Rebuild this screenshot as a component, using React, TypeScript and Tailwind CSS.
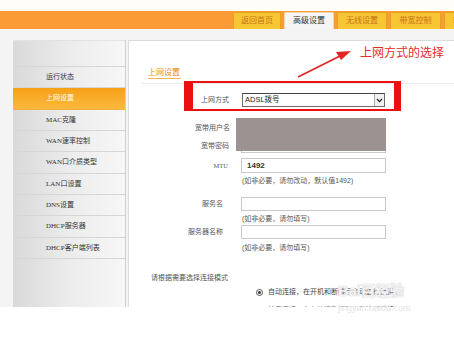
import React from "react";

const cjk = { fontFamily: '"Liberation Sans","Noto Sans CJK SC",sans-serif' };
const serif = { fontFamily: '"Liberation Serif","Noto Sans CJK SC",serif' };

const tabs = [
  { t: "返回首页", w: 48, active: false },
  { t: "高级设置", w: 50, active: true },
  { t: "无线设置", w: 50, active: false },
  { t: "带宽控制", w: 51, active: false },
  { t: "软件升级", w: 50, active: false },
];

const menu = [
  "运行状态",
  "上网设置",
  "MAC克隆",
  "WAN速率控制",
  "WAN口介质类型",
  "LAN口设置",
  "DNS设置",
  "DHCP服务器",
  "DHCP客户端列表",
];

function Input({ value, h = "h-[14px]" }: { value?: string; h?: string }) {
  return (
    <div className={`w-[145px] ${h} border border-[#c9c9c9] bg-white flex items-center pl-[5px] text-[8px] font-bold text-[#333]`}>
      {value}
    </div>
  );
}

export default function App() {
  return (
    <div className="relative w-[454px] h-[340px] bg-white overflow-hidden" style={cjk}>
      {/* top strip */}
      <div className="h-[11px] bg-[#fffdf8]" />
      {/* orange bar with tabs */}
      <div className="h-[18px] bg-[#fa9b36] flex items-end pl-[233px] gap-[3px] overflow-hidden">
        {tabs.map((tb) => (
          <div
            key={tb.t}
            style={{ width: tb.w }}
            className={`shrink-0 h-[17px] rounded-t-[2px] flex items-center justify-center text-[8px] ${
              tb.active
                ? "bg-[#f5f5f5] text-[#333] border-t border-x border-[#f3d9a8]"
                : "bg-[#f8c534] text-[#c8741c] border-x border-t border-[#e3a31f]"
            }`}
          >
            {tb.t}
          </div>
        ))}
      </div>

      {/* main gray area */}
      <div className="h-[278px] bg-[#f4f4f4] pt-[11px] pl-[13px] flex gap-[2px] overflow-hidden">
        {/* sidebar */}
        <div className="w-[113px] shrink-0 bg-gradient-to-r from-[#d9d9d9] via-[#ececec] to-[#f7f7f7] border-r border-[#cfcfcf] border-t border-t-[#e2e2e2]" style={serif}>
          <div className="h-[26px] border-b border-[#d6d6d6]" />
          {menu.map((m, i) => (
            <div
              key={m}
              className={`h-[21.33px] flex items-center pl-[33px] text-[7px] border-b ${
                i === 1
                  ? "bg-gradient-to-b from-[#f6a016] to-[#fcb93c] text-white border-[#f6b040]"
                  : "text-[#333] border-[#d6d6d6]"
              }`}
            >
              {m}
            </div>
          ))}
        </div>

        {/* content */}
        <div className="relative flex-1 bg-white border-l border-t border-[#dcdcdc] text-[7px] text-[#555]">
          {/* title */}
          <div className="h-[43px] ml-[12px] border-b border-[#ececec] flex items-end pb-[4px] pl-[7px]">
            <span className="text-[8px] text-[#e98a10] border-b border-[#f3b45a] leading-[11px] pr-[1px]">上网设置</span>
          </div>

          {/* 上网方式 */}
          <div className="flex items-center mt-[9px] h-[14px]">
            <div className="w-[100px] text-right">上网方式</div>
            <div className="ml-[13px] w-[143px] h-[14px] border border-[#6a6a6a] border-t-[#444] bg-white flex items-center justify-between">
              <span className="pl-[2px] text-[7.5px] text-[#222]">ADSL拨号</span>
              <div className="w-[10px] h-[12px] border-l border-[#aaa] bg-[#f0f0f0] flex items-center justify-center">
                <svg width="7" height="5" viewBox="0 0 7 5">
                  <path d="M1 1 L3.5 3.6 L6 1" stroke="#222" strokeWidth="1.2" fill="none" />
                </svg>
              </div>
            </div>
          </div>

          {/* 宽带用户名 */}
          <div className="flex items-center mt-[14px] h-[14px]">
            <div className="w-[101px] text-right">宽带用户名</div>
            <div className="ml-[11px]">
              <Input />
            </div>
          </div>
          {/* 宽带密码 */}
          <div className="flex items-center mt-[4px] h-[14px]">
            <div className="w-[100px] text-right">宽带密码</div>
            <div className="ml-[12px]">
              <Input />
            </div>
          </div>

          {/* MTU */}
          <div className="flex items-center mt-[5px] h-[15px]">
            <div className="w-[99px] text-right text-[6.5px]" style={serif}>MTU</div>
            <div className="ml-[13px]">
              <Input value="1492" h="h-[15px]" />
            </div>
          </div>
          <div className="ml-[113px] mt-[3px] h-[10px] leading-[10px]">(如非必要，请勿改动，默认值1492)</div>

          {/* 服务名 */}
          <div className="flex items-center mt-[11px] h-[14px]">
            <div className="w-[94px] text-right">服务名</div>
            <div className="ml-[18px]">
              <Input />
            </div>
          </div>
          <div className="ml-[113px] mt-[3px] h-[10px] leading-[10px]">(如非必要，请勿填写)</div>

          {/* 服务器名称 */}
          <div className="flex items-center mt-[1px] h-[14px]">
            <div className="w-[94px] text-right">服务器名称</div>
            <div className="ml-[18px]">
              <Input />
            </div>
          </div>
          <div className="ml-[113px] mt-[4px] h-[10px] leading-[10px]">(如非必要，请勿填写)</div>

          <div className="ml-[22px] mt-[20px] h-[10px] leading-[10px]">请根据需要选择连接模式</div>

          <div className="ml-[127px] mt-[4px] h-[10px] flex items-center gap-[5px]">
            <div className="w-[7px] h-[7px] rounded-full border border-[#555] flex items-center justify-center">
              <div className="w-[3px] h-[3px] rounded-full bg-[#333]" />
            </div>
            <span className="text-[#444]">自动连接，在开机和断线后自动进行连接。</span>
          </div>
          <div className="ml-[127px] mt-[8px] h-[10px] flex items-center gap-[5px]">
            <div className="w-[7px] h-[7px] rounded-full border border-[#777]" />
            <span className="text-[#666]">按需连接，在有访问数据时自动进行连接。</span>
          </div>

          {/* redaction block */}
          <div className="absolute left-[107px] top-[77px] w-[150px] h-[33px] bg-[#9c9292]" />

          {/* red annotation box */}
          <div className="absolute left-[55px] top-[40px] w-[217px] h-[30px] border-y-2 border-[#ec1010] border-l-[9px] border-r-[7px]" />
        </div>
      </div>

      {/* annotation arrow & text */}
      <svg className="absolute left-0 top-0 pointer-events-none" width="454" height="340">
        <line x1="298" y1="77" x2="340" y2="56" stroke="#e22424" strokeWidth="1.6" />
        <polygon points="351,51 336,52 341,60" fill="#e22424" />
      </svg>
      <div className="absolute left-[360px] top-[45px] text-[12px] leading-[16px] text-[#e42b2b]">上网方式的选择</div>

      {/* watermark */}
      <div
        className="absolute left-[338px] top-[282px] text-[15px] leading-[18px] font-bold tracking-tight"
        style={{ color: "rgba(255,255,255,0.8)", textShadow: "0 0 1px #c8c8c8, 0 0 1px #c8c8c8" }}
      >
        Bai百经验
      </div>
      <div className="absolute left-[338px] top-[303px] text-[9px] leading-[10px] text-[#e4e4e4]">jingyan.baidu.com</div>
    </div>
  );
}
